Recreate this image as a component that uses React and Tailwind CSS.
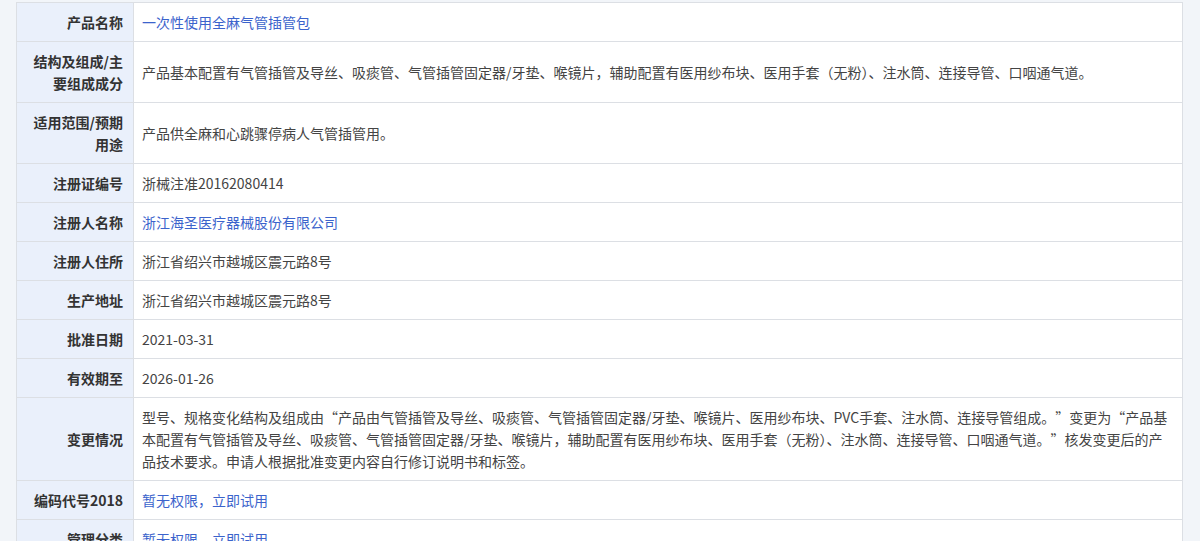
const rows = [
  { label: "产品名称", value: "一次性使用全麻气管插管包", link: true },
  {
    label: "结构及组成/主要组成成分",
    value:
      "产品基本配置有气管插管及导丝、吸痰管、气管插管固定器/牙垫、喉镜片，辅助配置有医用纱布块、医用手套（无粉）、注水筒、连接导管、口咽通气道。",
  },
  { label: "适用范围/预期用途", value: "产品供全麻和心跳骤停病人气管插管用。" },
  { label: "注册证编号", value: "浙械注准20162080414" },
  { label: "注册人名称", value: "浙江海圣医疗器械股份有限公司", link: true },
  { label: "注册人住所", value: "浙江省绍兴市越城区震元路8号" },
  { label: "生产地址", value: "浙江省绍兴市越城区震元路8号" },
  { label: "批准日期", value: "2021-03-31" },
  { label: "有效期至", value: "2026-01-26" },
  {
    label: "变更情况",
    value:
      "型号、规格变化结构及组成由“产品由气管插管及导丝、吸痰管、气管插管固定器/牙垫、喉镜片、医用纱布块、PVC手套、注水筒、连接导管组成。”变更为“产品基本配置有气管插管及导丝、吸痰管、气管插管固定器/牙垫、喉镜片，辅助配置有医用纱布块、医用手套（无粉）、注水筒、连接导管、口咽通气道。”核发变更后的产品技术要求。申请人根据批准变更内容自行修订说明书和标签。",
  },
  { label: "编码代号2018", value: "暂无权限，立即试用", link: true },
  { label: "管理分类", value: "暂无权限，立即试用", link: true },
];

// the original shows curly quotes at full width: give each a 1em box
function Value({ text }) {
  const parts = text.split(/([“”])/);
  return parts.map((p, i) => {
    if (p === "“") {
      return (
        <span key={i} className="inline-block w-[1em] text-right">
          {p}
        </span>
      );
    }
    if (p === "”") {
      return (
        <span key={i} className="inline-block w-[1em] text-left">
          {p}
        </span>
      );
    }
    return p;
  });
}

export default function App() {
  return (
    <div
      className="min-h-screen bg-[#f2f5f9] pl-4 pt-[2px] pr-[17px]"
      style={{ fontFamily: '"Noto Sans CJK SC", "Microsoft YaHei", sans-serif' }}
    >
      <table className="w-full border-collapse bg-white text-[14px] leading-[22px]">
        <tbody>
          {rows.map((row) => (
            <tr key={row.label}>
              {/* label column */}
              <th className="w-[117px] border border-[#dcdfe4] bg-[#eaf0fb] py-2 pl-[10px] pr-[10px] text-right align-middle font-bold text-[#333]">
                {row.label}
              </th>
              <td
                className={`border border-[#dcdfe4] py-2 pl-[8px] pr-[12px] align-middle ${
                  row.link ? "text-[#3b63cc]" : "text-[#444]"
                }`}
              >
                <Value text={row.value} />
              </td>
            </tr>
          ))}
        </tbody>
      </table>
    </div>
  );
}
